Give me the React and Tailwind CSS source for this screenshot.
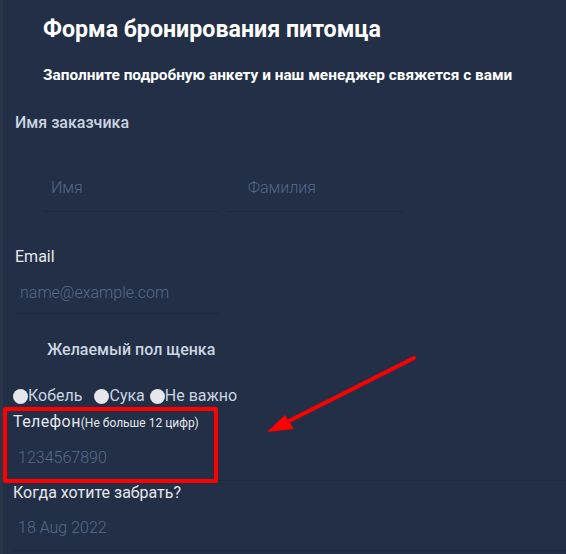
import React from "react";

function Radio({ label, className = "" }) {
  return (
    <label className={`flex items-center ${className}`}>
      <span className="inline-block size-[15px] rounded-full bg-[#e5e7eb]" />
      <span>{label}</span>
    </label>
  );
}

export default function App() {
  return (
    <div
      className="relative h-[554px] w-full overflow-hidden border-l-[3px] border-[#2a3548] bg-[#222f46] text-[#d1d5db]"
      style={{ fontFamily: "Roboto, 'Noto Sans', sans-serif" }}
    >
      <div className="px-[40px] pt-[14px]">
        <h1 className="text-[23.2px] leading-[30px] font-bold text-white">Форма бронирования питомца</h1>
        <p className="mt-[21px] text-[15.4px] leading-[20px] font-bold text-white">
          Заполните подробную анкету и наш менеджер свяжется с вами
        </p>
      </div>

      <div className="mt-[28px] pl-[12px] text-[16px] leading-[20px] font-medium text-[#cbd5e1]">Имя заказчика</div>

      <div className="mt-[45px] flex gap-[8px] pl-[40px]">
        <div className="w-[175px] border-b border-[#1d293d] pb-[13px] pl-[8px] text-[16px] leading-[20px] font-light text-[#566a8a]">Имя</div>
        <div className="w-[177px] border-b border-[#1d293d] pb-[13px] pl-[22px] text-[16px] leading-[20px] font-light text-[#566a8a]">Фамилия</div>
      </div>

      <div className="mt-[35px] pl-[12px] text-[16px] leading-[20px] text-[#e5e7eb]">Email</div>
      <div className="ml-[12px] mt-[16px] w-[204px] border-b border-[#1d293d] pb-[10px] pl-[5px] text-[16px] leading-[20px] font-light text-[#566a8a]">
        name@example.com
      </div>

      <div className="mt-[26px] pl-[44px] text-[16px] leading-[20px] font-medium text-[#cbd5e1]">Желаемый пол щенка</div>

      <div className="mt-[26px] flex items-center pl-[10px] text-[16px] leading-[20px] text-[#cbd5e1]">
        <Radio label="Кобель" />
        <Radio label="Сука" className="ml-[12px]" />
        <Radio label="Не важно" className="ml-[5px]" />
      </div>

      <div className="relative">
        <div className="border-b border-[#1e2a3e] pb-[12px]">
          <div className="pl-[10px] pt-[6px] text-[16px] leading-[20px] text-[#e5e7eb]">
            <span className="tracking-[0.4px]">Телефон</span>
            <span className="text-[12px]">(Не больше 12 цифр)</span>
          </div>
          <div className="mt-[15px] pl-[15px] text-[16px] leading-[20px] font-light text-[#566a8a]">1234567890</div>
        </div>
        <div className="absolute left-0 top-[1px] h-[76px] w-[215px] rounded-[2px] border-[4px] border-[#ff0000]" />
      </div>

      <div className="pl-[10px] pt-[2px] text-[16px] leading-[20px] text-[#e5e7eb]">Когда хотите забрать?</div>
      <div className="ml-[10px] mt-[15px] border-b border-[#1d293d] pb-[12px] pl-[5px] text-[16px] leading-[20px] font-light text-[#566a8a]">
        18 Aug 2022
      </div>

      <svg className="pointer-events-none absolute left-0 top-0" width="566" height="554">
        <line x1="411" y1="358" x2="280" y2="424" stroke="#ff0000" strokeWidth="4" strokeLinecap="round" />
        <polygon points="264,432 282,415 291,429" fill="#ff0000" />
      </svg>
    </div>
  );
}
